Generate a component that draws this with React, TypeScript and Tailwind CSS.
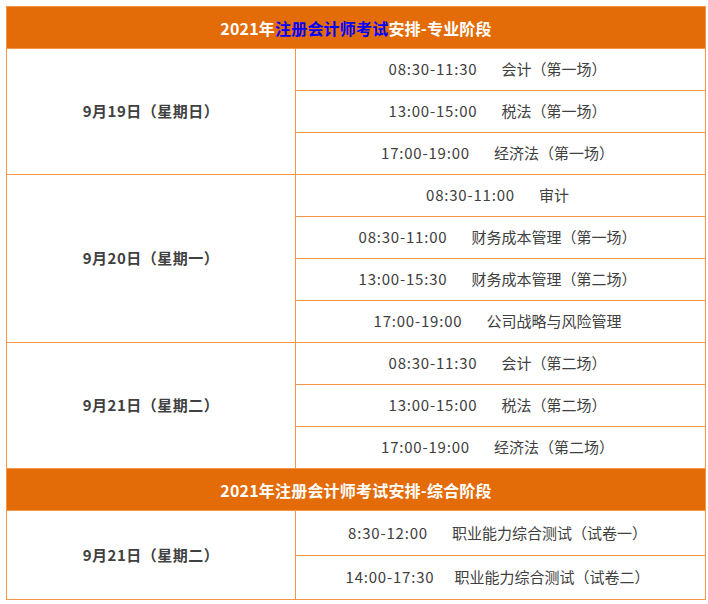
import React from 'react';

type Exam = { time: string; name: string; gap?: number };
type Day = { date: string; exams: Exam[] };

const stage1: Day[] = [
  {
    date: '9月19日（星期日）',
    exams: [
      { time: '08:30-11:30', name: '会计（第一场）' },
      { time: '13:00-15:00', name: '税法（第一场）' },
      { time: '17:00-19:00', name: '经济法（第一场）' },
    ],
  },
  {
    date: '9月20日（星期一）',
    exams: [
      { time: '08:30-11:00', name: '审计' },
      { time: '08:30-11:00', name: '财务成本管理（第一场）' },
      { time: '13:00-15:30', name: '财务成本管理（第二场）' },
      { time: '17:00-19:00', name: '公司战略与风险管理' },
    ],
  },
  {
    date: '9月21日（星期二）',
    exams: [
      { time: '08:30-11:30', name: '会计（第二场）' },
      { time: '13:00-15:00', name: '税法（第二场）' },
      { time: '17:00-19:00', name: '经济法（第二场）' },
    ],
  },
];

const stage2: Day[] = [
  {
    date: '9月21日（星期二）',
    exams: [
      { time: '8:30-12:00', name: '职业能力综合测试（试卷一）' },
      { time: '14:00-17:30', name: '职业能力综合测试（试卷二）', gap: 20 },
    ],
  },
];

const border = 'border border-[#f79646]';

function HeaderRow({ children }: { children: React.ReactNode }) {
  return (
    <tr className="h-[42px]">
      <td colSpan={2} className={`${border} bg-[#e36c09] text-center text-[16px] font-bold tracking-[0.2px] text-white`}>
        {children}
      </td>
    </tr>
  );
}

function DayRows({ day, rowH }: { day: Day; rowH: string }) {
  return (
    <>
      {day.exams.map((e, i) => (
        <tr key={i} className={rowH}>
          {i === 0 && (
            <td rowSpan={day.exams.length} className={`${border} w-[289px] text-center text-[15px] font-bold tracking-[0.5px] text-[#404040]`}>
              {day.date}
            </td>
          )}
          <td className={`${border} pr-[6px] text-center text-[15px] text-[#404040]`}>
            <span className="tracking-[0.8px]">{e.time}</span>
            <span style={{ marginLeft: e.gap ?? 24 }}>{e.name}</span>
          </td>
        </tr>
      ))}
    </>
  );
}

export default function App() {
  return (
    <div className="min-h-[604px] bg-white pl-[6px] pt-[6px]" style={{ fontFamily: '"Noto Sans CJK SC", "Noto Sans", sans-serif' }}>
      <table className="w-[700px] border-collapse">
        <tbody>
          <HeaderRow>
            2021年<span className="text-[#0000ff]">注册会计师考试</span>安排-专业阶段
          </HeaderRow>
          {stage1.map((d, i) => (
            <DayRows key={i} day={d} rowH="h-[42px]" />
          ))}
          <HeaderRow>2021年注册会计师考试安排-综合阶段</HeaderRow>
          {stage2.map((d, i) => (
            <DayRows key={i} day={d} rowH="h-[44.5px]" />
          ))}
        </tbody>
      </table>
    </div>
  );
}
